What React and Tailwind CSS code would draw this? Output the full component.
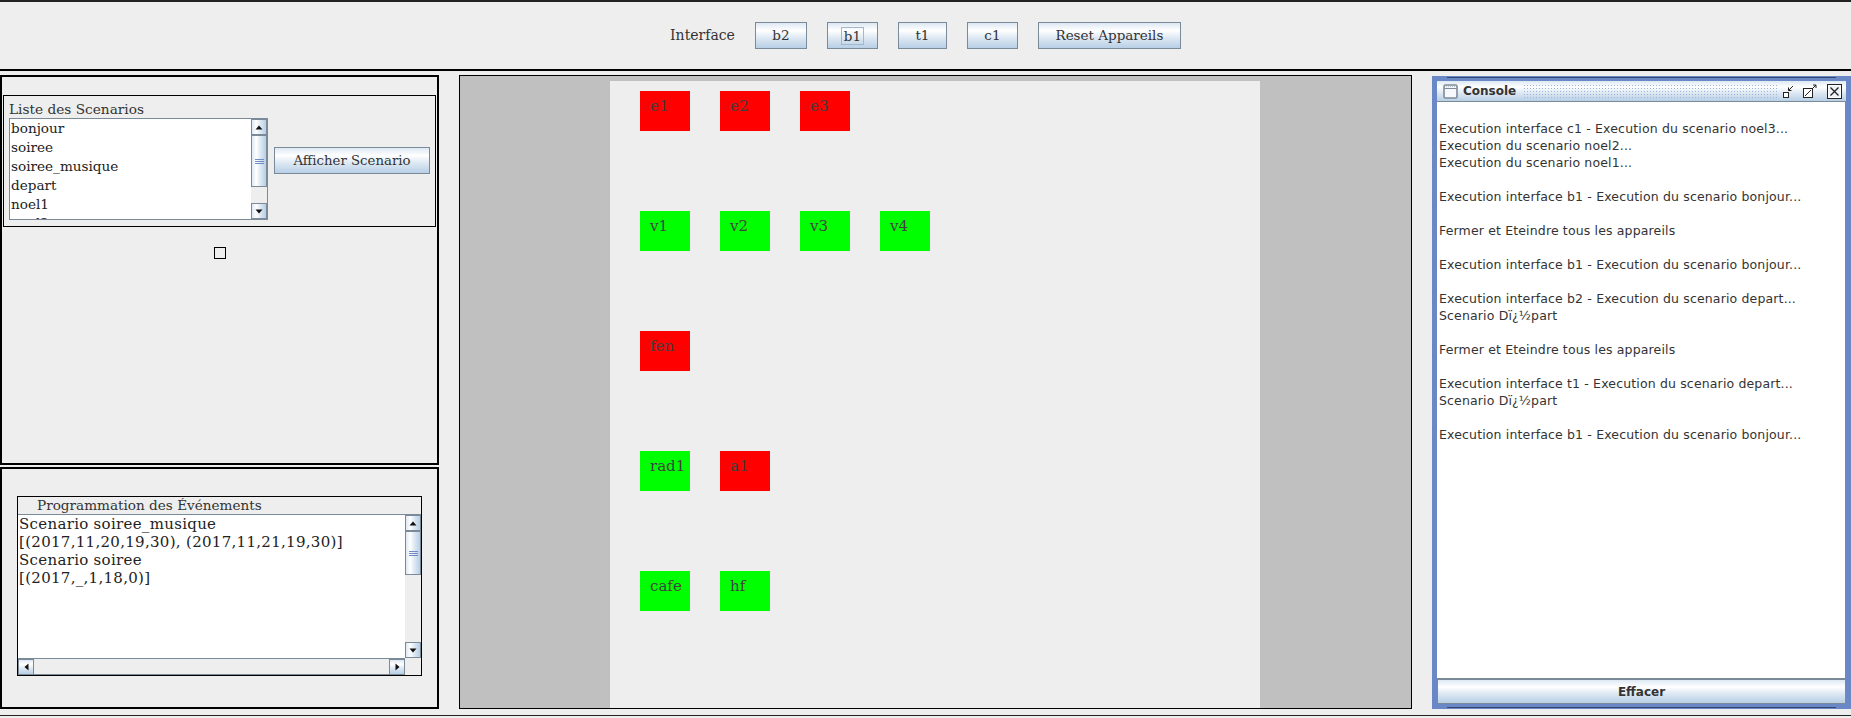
import React from "react";

const btnGrad =
  "bg-[linear-gradient(to_bottom,#dde8f3_0%,#ffffff_30%,#dde8f3_60%,#b8cfe5_100%)]";
const btnGradH =
  "bg-[linear-gradient(to_right,#dde8f3_0%,#ffffff_30%,#dde8f3_60%,#b8cfe5_100%)]";

function JButton({ className, children }) {
  return (
    <div
      className={`h-[27px] shrink-0 border border-[#7a8a99] ${btnGrad} flex items-center justify-center leading-[17px] text-[#333333] ${className}`}
    >
      {children}
    </div>
  );
}

function Tri({ dir }) {
  if (dir === "up")
    return (
      <svg width="8" height="5" viewBox="0 0 8 5">
        <polygon points="0.5,4.5 4,0.5 7.5,4.5" fill="#111" />
      </svg>
    );
  if (dir === "down")
    return (
      <svg width="8" height="5" viewBox="0 0 8 5">
        <polygon points="0.5,0.5 4,4.5 7.5,0.5" fill="#111" />
      </svg>
    );
  if (dir === "left")
    return (
      <svg width="5" height="8" viewBox="0 0 5 8">
        <polygon points="4.5,0.5 0.5,4 4.5,7.5" fill="#111" />
      </svg>
    );
  return (
    <svg width="5" height="8" viewBox="0 0 5 8">
      <polygon points="0.5,0.5 4.5,4 0.5,7.5" fill="#111" />
    </svg>
  );
}

function ArrowBtn({ dir }) {
  const vertical = dir === "up" || dir === "down";
  return (
    <div
      className={`w-[16px] h-[16px] shrink-0 border border-[#7a8a99] ${
        vertical ? btnGradH : btnGrad
      } flex items-center justify-center`}
    >
      <Tri dir={dir} />
    </div>
  );
}

function VScroll({ thumbH }) {
  return (
    <div className="w-[16px] shrink-0 flex flex-col bg-[#eeeeee]">
      <ArrowBtn dir="up" />
      <div className="flex-1 flex flex-col">
        <div
          className={`${thumbH} w-[16px] border border-[#7a8a99] ${btnGradH} flex items-center justify-center`}
        >
          <svg width="9" height="7" viewBox="0 0 9 7">
            <path d="M0 1.5 H9 M0 3.5 H9 M0 5.5 H9" stroke="#6f8cc4" strokeWidth="1" />
          </svg>
        </div>
      </div>
      <ArrowBtn dir="down" />
    </div>
  );
}

function Device({ label, on }) {
  return (
    <div
      className={`w-[50px] h-[40px] shrink-0 pl-[10px] pt-[7px] text-[15px] leading-[17px] text-[#404040] ${
        on ? "bg-[#00ff00]" : "bg-[#ff0000]"
      }`}
    >
      {label}
    </div>
  );
}

const consoleLines = [
  "",
  "Execution interface c1 - Execution du scenario noel3...",
  "Execution du scenario noel2...",
  "Execution du scenario noel1...",
  "",
  "Execution interface b1 - Execution du scenario bonjour...",
  "",
  "Fermer et Eteindre tous les appareils",
  "",
  "Execution interface b1 - Execution du scenario bonjour...",
  "",
  "Execution interface b2 - Execution du scenario depart...",
  "Scenario D\u00ef\u00bf\u00bdpart",
  "",
  "Fermer et Eteindre tous les appareils",
  "",
  "Execution interface t1 - Execution du scenario depart...",
  "Scenario D\u00ef\u00bf\u00bdpart",
  "",
  "Execution interface b1 - Execution du scenario bonjour...",
];

export default function App() {
  return (
    <div className="w-[1851px] h-[718px] bg-[#eeeeee] flex flex-col overflow-hidden text-[#333333] font-['DejaVu_Serif',serif]">
      <div className="h-[2px] shrink-0 bg-[#222222]" />
      {/* Top bar */}
      <div className="h-[67px] shrink-0 flex items-center justify-center gap-[20px]">
        <span className="text-[14px] leading-[17px]">Interface</span>
        <JButton className="w-[52px] text-[13.5px]">b2</JButton>
        <JButton className="w-[51px] text-[13.5px]">
          <span className="border border-[#a3b8cc] px-[2px] leading-[16px]">b1</span>
        </JButton>
        <JButton className="w-[49px] text-[13.5px]">t1</JButton>
        <JButton className="w-[51px] text-[13.5px]">c1</JButton>
        <JButton className="w-[143px] text-[13.5px]">Reset Appareils</JButton>
      </div>
      <div className="h-[2px] shrink-0 bg-black" />
      <div className="h-[4px] shrink-0" />

      {/* Main */}
      <div className="h-[634px] shrink-0 flex">
        {/* Left column */}
        <div className="w-[439px] shrink-0 flex flex-col gap-[2px]">
          <div className="h-[390px] border-2 border-black flex flex-col">
            <div className="mt-[18px] ml-[1px] w-[433px] h-[132px] border border-black flex flex-col">
              <div className="h-[22px] pt-[5px] pl-[5px] text-[13.7px] leading-[17px]">
                Liste des Scenarios
              </div>
              <div className="flex items-start">
                <div className="ml-[5px] w-[259px] h-[102px] border border-[#7a8a99] bg-white flex overflow-hidden">
                  <div className="flex-1 pl-[1px] text-[13.6px] leading-[19px] text-[#222222] overflow-hidden">
                    <div>bonjour</div>
                    <div>soiree</div>
                    <div>soiree_musique</div>
                    <div>depart</div>
                    <div>noel1</div>
                    <div>noel2</div>
                  </div>
                  <VScroll thumbH="h-[52px]" />
                </div>
                <JButton className="ml-[6px] mt-[29px] w-[156px] text-[13.3px]">Afficher Scenario</JButton>
              </div>
            </div>
            <div className="mt-[20px] self-center w-[12px] h-[12px] border border-black" />
          </div>

          <div className="h-[242px] border-2 border-black flex flex-col">
            <div className="mt-[27px] ml-[15px] w-[405px] h-[180px] border border-black flex flex-col">
              <div className="h-[17px] shrink-0 pl-[19px] text-[13.6px] leading-[17px]">
                Programmation des Événements
              </div>
              <div className="flex-1 flex flex-col border-t border-[#7a8a99] bg-white">
                <div className="h-[143px] flex">
                  <div className="flex-1 pl-[1px] text-[15px] leading-[18px] text-[#222222] tracking-[0.3px] overflow-hidden whitespace-nowrap">
                    <div>Scenario soiree_musique</div>
                    <div>[(2017,11,20,19,30), (2017,11,21,19,30)]</div>
                    <div>Scenario soiree</div>
                    <div>[(2017,_,1,18,0)]</div>
                  </div>
                  <VScroll thumbH="h-[44px]" />
                </div>
                <div className="flex-1 flex bg-[#eeeeee]">
                  <div className="flex-1 flex border-t border-[#7a8a99]">
                    <ArrowBtn dir="left" />
                    <div className="flex-1 border-b border-[#7a8a99]" />
                    <ArrowBtn dir="right" />
                  </div>
                  <div className="w-[16px] shrink-0" />
                </div>
              </div>
            </div>
          </div>
        </div>

        <div className="w-[20px] shrink-0" />

        {/* Middle canvas */}
        <div className="w-[953px] shrink-0 border border-black bg-[#c0c0c0] flex flex-col">
          <div className="ml-[150px] mt-[5px] w-[650px] flex-1 bg-[#eeeeee] pt-[10px] pl-[30px] flex flex-col gap-[80px]">
            <div className="flex gap-[30px]">
              <Device label="e1" />
              <Device label="e2" />
              <Device label="e3" />
            </div>
            <div className="flex gap-[30px]">
              <Device label="v1" on />
              <Device label="v2" on />
              <Device label="v3" on />
              <Device label="v4" on />
            </div>
            <div className="flex gap-[30px]">
              <Device label="fen" />
            </div>
            <div className="flex gap-[30px]">
              <Device label="rad1" on />
              <Device label="a1" />
            </div>
            <div className="flex gap-[30px]">
              <Device label="cafe" on />
              <Device label="hf" on />
            </div>
          </div>
        </div>

        <div className="w-[20px] shrink-0" />

        {/* Console internal frame */}
        <div className="mt-[1px] w-[419px] h-[633px] shrink-0 bg-[#6a88c6] flex flex-col font-['DejaVu_Sans',sans-serif]">
          <div className="h-[5px] shrink-0 pt-[1px] px-[15px]">
            <div className="h-[1px] bg-[#34466e]" />
          </div>
          <div className="flex-1 min-h-0 mx-[5px] flex flex-col">
            <div
              className={`h-[21px] shrink-0 ${btnGrad} border-b border-[#7a8a99] flex items-center pl-[6px] pr-[4px]`}
            >
              <svg width="15" height="15" viewBox="0 0 15 15" className="shrink-0">
                <rect x="1" y="1" width="13" height="13" rx="1.5" fill="#f6f8fb" stroke="#7f8b99" strokeWidth="1.6" />
                <line x1="1.5" y1="4.5" x2="13.5" y2="4.5" stroke="#7f8b99" strokeWidth="1" />
                <path d="M3 2.6 H12" stroke="#9aa7b8" strokeWidth="0.8" strokeDasharray="1 1" />
              </svg>
              <span className="ml-[5px] text-[12px] font-bold leading-[15px] text-[#333333]">Console</span>
              <div className="flex-1 mx-[7px] mr-[4px] h-[14px] bg-[radial-gradient(#9db3da_40%,transparent_45%)] bg-size-[3px_3px]" />
              <svg width="14" height="15" viewBox="0 0 14 15" className="shrink-0">
                <rect x="2.5" y="8.5" width="5" height="5" fill="#ffffff" stroke="#222" />
                <path d="M12 2 L7.5 6.5" stroke="#222" strokeWidth="1" />
                <path d="M7.5 3.5 V6.5 H10.5" fill="none" stroke="#222" strokeWidth="1" />
              </svg>
              <svg width="15" height="15" viewBox="0 0 15 15" className="ml-[7px] shrink-0">
                <rect x="1.5" y="4.5" width="9" height="9" fill="#ffffff" stroke="#222" />
                <path d="M3 12 L9 6" stroke="#222" strokeWidth="1" />
                <path d="M10 5 L14 1" stroke="#222" strokeWidth="1" />
                <path d="M11 1 H14 V4" fill="none" stroke="#222" strokeWidth="1" />
              </svg>
              <svg width="15" height="15" viewBox="0 0 15 15" className="ml-[10px] shrink-0">
                <rect x="0.5" y="0.5" width="14" height="14" fill="#eef3f9" stroke="#222" />
                <rect x="1.5" y="1.5" width="12" height="12" fill="none" stroke="#ffffff" />
                <path d="M3.5 3.5 L11.5 11.5 M11.5 3.5 L3.5 11.5" stroke="#222" strokeWidth="1.3" />
              </svg>
            </div>
            <div className="flex-1 min-h-0 bg-white border-r border-b border-[#7a8a99] pl-[2px] pt-[1px] text-[12.5px] tracking-[0.15px] leading-[17px] text-[#333333] overflow-hidden whitespace-pre">
              {consoleLines.map((l, i) => (
                <div key={i} className="h-[17px]">
                  {l}
                </div>
              ))}
            </div>
            <div
              className={`h-[25px] shrink-0 border border-[#7a8a99] ${btnGrad} flex items-center justify-center text-[12px] font-bold text-[#333333]`}
            >
              Effacer
            </div>
          </div>
          <div className="h-[5px] shrink-0 pb-[1px] px-[15px] flex items-end">
            <div className="h-[1px] w-full bg-[#34466e]" />
          </div>
        </div>
      </div>

      <div className="h-[6px] shrink-0" />
      <div className="h-[1px] shrink-0 bg-[#222222]" />
    </div>
  );
}
